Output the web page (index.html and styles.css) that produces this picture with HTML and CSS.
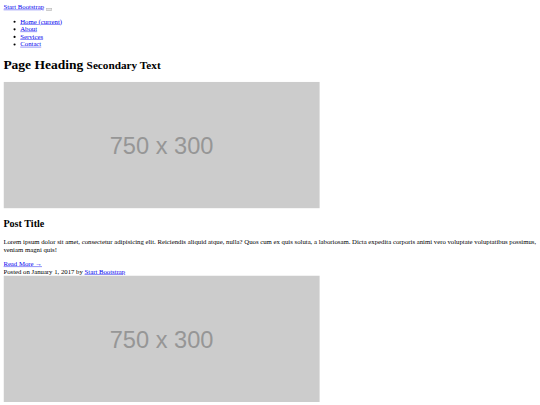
FILE: index.html
```html
<!DOCTYPE html>
<html lang="en">
<head>
<meta charset="utf-8">
<title>Blog Home - Start Bootstrap</title>
<link rel="stylesheet" href="styles.css">
</head>
<body class="page">
<nav class="navbar">
  <div class="container">
    <a class="navbar-brand" href="#">Start Bootstrap</a>
    <button class="navbar-toggler" type="button"><span class="navbar-toggler-icon"></span></button>
    <div class="navbar-collapse">
      <ul class="navbar-nav">
        <li class="nav-item"><a class="nav-link" href="#">Home <span class="sr-only">(current)</span></a></li>
        <li class="nav-item"><a class="nav-link" href="#">About</a></li>
        <li class="nav-item"><a class="nav-link" href="#">Services</a></li>
        <li class="nav-item"><a class="nav-link" href="#">Contact</a></li>
      </ul>
    </div>
  </div>
</nav>
<div class="container">
  <h1 class="page-title">Page Heading <small class="page-subtitle">Secondary Text</small></h1>
  <div class="card">
    <svg class="card-img" width="750" height="300" viewBox="0 0 750 300" xmlns="http://www.w3.org/2000/svg">
      <rect width="750" height="300" fill="#cccccc"/>
      <text x="375" y="172" text-anchor="middle" class="ph-text">750 x 300</text>
    </svg>
    <div class="card-body">
      <h2 class="card-title">Post Title</h2>
      <p class="card-text">Lorem ipsum dolor sit amet, consectetur adipisicing elit. Reiciendis aliquid atque, nulla? Quos cum ex quis soluta, a laboriosam. Dicta expedita corporis animi vero voluptate voluptatibus possimus, veniam magni quis!</p>
      <a href="#" class="btn">Read More &rarr;</a>
    </div>
    <div class="card-footer">Posted on January 1, 2017 by <a href="#">Start Bootstrap</a></div>
  </div>
  <div class="card">
    <svg class="card-img" width="750" height="300" viewBox="0 0 750 300" xmlns="http://www.w3.org/2000/svg">
      <rect width="750" height="300" fill="#cccccc"/>
      <text x="375" y="172" text-anchor="middle" class="ph-text">750 x 300</text>
    </svg>
  </div>
</div>
</body>
</html>
```
FILE: styles.css
```css
html {
  width: 1280px;
  height: 960px;
  overflow: hidden;
  transform: scale(0.421875);
  transform-origin: 0 0;
}
.page {
  margin: 8px;
  font-family: "Liberation Serif", "Times New Roman", serif;
  font-size: 16px;
  color: #000;
  background: #fff;
}
.ph-text {
  font-family: "Liberation Sans", Arial, sans-serif;
  font-size: 56px;
  fill: #969696;
}
```
